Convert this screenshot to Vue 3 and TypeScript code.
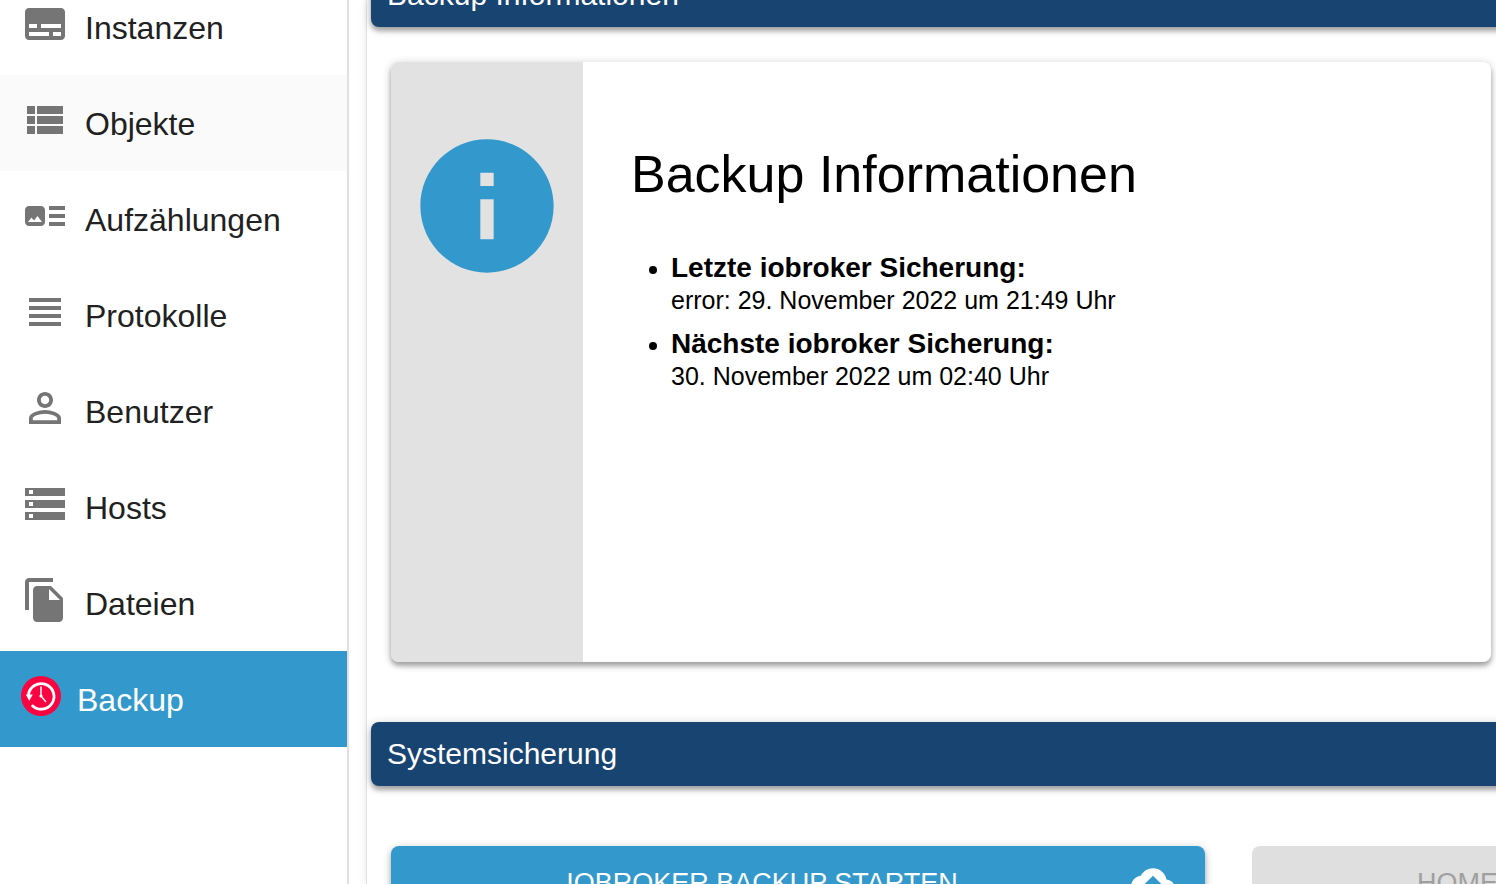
<script setup lang="ts">
interface NavItem {
  label: string
  path?: string
  hovered?: boolean
  active?: boolean
}

interface BackupEntry {
  title: string
  value: string
}

interface BackupAction {
  label: string
  disabled: boolean
}

const navItems: NavItem[] = [
  {
    label: 'Instanzen',
    path: 'M20 4H4c-1.1 0-2 .9-2 2v12c0 1.1.9 2 2 2h16c1.1 0 2-.9 2-2V6c0-1.1-.9-2-2-2zM4 12h4v2H4v-2zm10 6H4v-2h10v2zm6 0h-4v-2h4v2zm0-4H10v-2h10v2z',
  },
  {
    label: 'Objekte',
    path: 'M3 14h4v-4H3v4zm0 5h4v-4H3v4zM3 9h4V5H3v4zm5 5h13v-4H8v4zm0 5h13v-4H8v4zM8 5v4h13V5H8z',
    hovered: true,
  },
  {
    label: 'Aufzählungen',
    path: 'M22 13h-8v-2h8v2zm0-6h-8v2h8V7zm-8 10h8v-2h-8v2zm-2-8v6c0 1.1-.9 2-2 2H4c-1.1 0-2-.9-2-2V9c0-1.1.9-2 2-2h6c1.1 0 2 .9 2 2zm-1.5 6l-2.25-3-1.75 2.26-1.25-1.51L3.5 15h7z',
  },
  {
    label: 'Protokolle',
    path: 'M4 15h16v-2H4v2zm0 4h16v-2H4v2zm0-8h16V9H4v2zm0-6v2h16V5H4z',
  },
  {
    label: 'Benutzer',
    path: 'M12 5.9c1.16 0 2.1.94 2.1 2.1s-.94 2.1-2.1 2.1S9.9 9.16 9.9 8s.94-2.1 2.1-2.1m0 9c2.97 0 6.1 1.46 6.1 2.1v1.1H5.9V17c0-.64 3.13-2.1 6.1-2.1M12 4C9.79 4 8 5.79 8 8s1.79 4 4 4 4-1.79 4-4-1.79-4-4-4zm0 9c-2.67 0-8 1.34-8 4v3h16v-3c0-2.66-5.33-4-8-4z',
  },
  {
    label: 'Hosts',
    path: 'M2 20h20v-4H2v4zm2-3h2v2H4v-2zM2 4v4h20V4H2zm4 3H4V5h2v2zm-4 7h20v-4H2v4zm2-3h2v2H4v-2z',
  },
  {
    label: 'Dateien',
    path: 'M16 1H4c-1.1 0-2 .9-2 2v14h2V3h12V1zm-1 4l6 6v10c0 1.1-.9 2-2 2H7.99C6.89 23 6 22.1 6 21l.01-14c0-1.1.89-2 1.99-2h7zm-1 7h5.5L14 6.5V12z',
  },
  { label: 'Backup', active: true },
]

const entries: BackupEntry[] = [
  { title: 'Letzte iobroker Sicherung:', value: 'error: 29. November 2022 um 21:49 Uhr' },
  { title: 'Nächste iobroker Sicherung:', value: '30. November 2022 um 02:40 Uhr' },
]

const actions: BackupAction[] = [
  { label: 'iobroker Backup starten', disabled: false },
  { label: 'HomeMatic Backup starten', disabled: true },
]
</script>

<template>
  <div class="app">
    <nav class="sidebar">
      <ul class="nav-list">
        <li v-for="item in navItems" :key="item.label">
          <a
            href="#"
            class="nav-item"
            :class="{ hovered: item.hovered, active: item.active }"
            :aria-current="item.active ? 'page' : undefined"
          >
            <svg v-if="item.path" class="nav-icon" viewBox="0 0 24 24" aria-hidden="true">
              <path :d="item.path" />
            </svg>
            <svg v-else class="backup-icon" viewBox="0 0 40 40" aria-hidden="true">
              <circle cx="20" cy="20" r="20" fill="#fb0340" />
              <path d="M7.5 19A12.8 12.8 0 1 1 10.8 29.1" fill="none" stroke="#fff" stroke-width="2.8" />
              <path d="M4.8 18.5h7L8.2 24.8z" fill="#fff" />
              <path d="M20 10.5v9.5" fill="none" stroke="#fff" stroke-width="1.8" opacity="0.85" />
              <path d="M20 20l5 6" fill="none" stroke="#fff" stroke-width="1.3" />
              <circle cx="20" cy="20" r="1.6" fill="#fff" />
            </svg>
            <span>{{ item.label }}</span>
          </a>
        </li>
      </ul>
    </nav>

    <main class="content">
      <h2 class="section-bar">Backup Informationen</h2>

      <section class="info-card">
        <div class="info-side">
          <svg class="info-icon" viewBox="0 0 24 24" aria-hidden="true">
            <path d="M12 2C6.48 2 2 6.48 2 12s4.48 10 10 10 10-4.48 10-10S17.52 2 12 2zm1 15h-2v-6h2v6zm0-8h-2V7h2v2z" />
          </svg>
        </div>
        <div class="info-body">
          <h1>Backup Informationen</h1>
          <ul class="entries">
            <li v-for="entry in entries" :key="entry.title">
              <strong>{{ entry.title }}</strong>
              <span>{{ entry.value }}</span>
            </li>
          </ul>
        </div>
      </section>

      <h2 class="section-bar">Systemsicherung</h2>

      <div class="actions">
        <button
          v-for="action in actions"
          :key="action.label"
          type="button"
          class="action"
          :disabled="action.disabled"
        >
          <span>{{ action.label }}</span>
          <svg class="action-icon" viewBox="0 0 24 24" aria-hidden="true">
            <path d="M19.35 10.04C18.67 6.59 15.64 4 12 4 9.11 4 6.6 5.64 5.35 8.04 2.34 8.36 0 10.91 0 14c0 3.31 2.69 6 6 6h13c2.76 0 5-2.24 5-5 0-2.64-2.05-4.78-4.65-4.96zM14 13v4h-4v-4H7l5-5 5 5h-3z" />
          </svg>
        </button>
      </div>
    </main>
  </div>
</template>

<style>
body {
  margin: 0;
  background: #fff;
}
</style>

<style scoped>
.app {
  display: flex;
  height: 100vh;
  overflow: hidden;
  font-family: "Liberation Sans", Arial, sans-serif;
  font-size: 32px;
  color: #000;
}

.sidebar {
  flex: none;
  width: 347px;
  border-right: 2px solid #e0e0e0;
}

.nav-list {
  list-style: none;
  margin: -21px 0 0;
  padding: 0;
}

.nav-item {
  display: flex;
  align-items: center;
  gap: 16px;
  height: 96px;
  padding: 2px 21px 0;
  box-sizing: border-box;
  color: #212121;
  text-decoration: none;
}

.nav-item.hovered {
  background: #fafafa;
}

.nav-item.active {
  background: #3399cc;
  color: #fff;
}

.nav-icon {
  width: 48px;
  height: 48px;
  padding-bottom: 8px;
  fill: #757575;
}

.backup-icon {
  width: 40px;
  height: 40px;
  padding-bottom: 8px;
}

.content {
  flex: 1;
  min-width: 0;
  margin-left: 18px;
  padding-left: 4px;
  box-shadow: 0 0 0 1px rgba(0, 0, 0, 0.05), 0 2px 2px rgba(0, 0, 0, 0.08), 0 2px 10px rgba(0, 0, 0, 0.1);
}

.section-bar {
  display: flex;
  align-items: center;
  height: 64px;
  box-sizing: border-box;
  margin: 0 -16px 0 0;
  padding: 0 16px;
  border-radius: 8px;
  background: #184472;
  color: #fff;
  font-size: 30px;
  font-weight: 400;
  box-shadow: 0 4px 4px rgba(0, 0, 0, 0.24), 0 2px 10px rgba(0, 0, 0, 0.24);
}

.section-bar:first-child {
  margin-top: -37px;
}

.info-card {
  display: flex;
  min-height: 600px;
  margin: 35px 5px 60px 20px;
  border-radius: 8px;
  overflow: hidden;
  background: #fff;
  box-shadow: 0 4px 4px rgba(0, 0, 0, 0.24), 0 2px 10px rgba(0, 0, 0, 0.24);
}

.info-side {
  flex: none;
  padding: 64px 16px;
  background: #e2e2e2;
}

.info-icon {
  display: block;
  width: 160px;
  height: 160px;
  fill: #3399cc;
}

.info-body {
  flex: 1;
  padding: 80px 48px;
}

.info-body h1 {
  margin: 0 0 45px;
  font-size: 52px;
  line-height: 64px;
  font-weight: 400;
}

.entries {
  margin: 0;
  padding-left: 40px;
  font-size: 25px;
}

.entries li {
  margin-bottom: 10px;
}

.entries strong,
.entries span {
  display: block;
  line-height: 33px;
}

.entries strong {
  font-size: 28px;
}

.actions {
  display: grid;
  grid-template-columns: repeat(2, 74%);
  gap: 47px;
  margin: 60px 5px 0 20px;
}

.action {
  display: flex;
  align-items: center;
  gap: 28px;
  height: 74px;
  padding: 0 30px;
  border: 0;
  border-radius: 8px;
  background: #3399cc;
  color: #fff;
  font-family: inherit;
  font-size: 27px;
  text-transform: uppercase;
  white-space: nowrap;
  box-shadow: 0 4px 4px rgba(0, 0, 0, 0.2), 0 2px 10px rgba(0, 0, 0, 0.24);
}

.action:disabled {
  background: #dfdfdf;
  color: #9f9f9f;
  box-shadow: none;
}

.action span {
  flex: 1;
}

.action-icon {
  flex: none;
  width: 44px;
  height: 44px;
  fill: currentColor;
}
</style>
